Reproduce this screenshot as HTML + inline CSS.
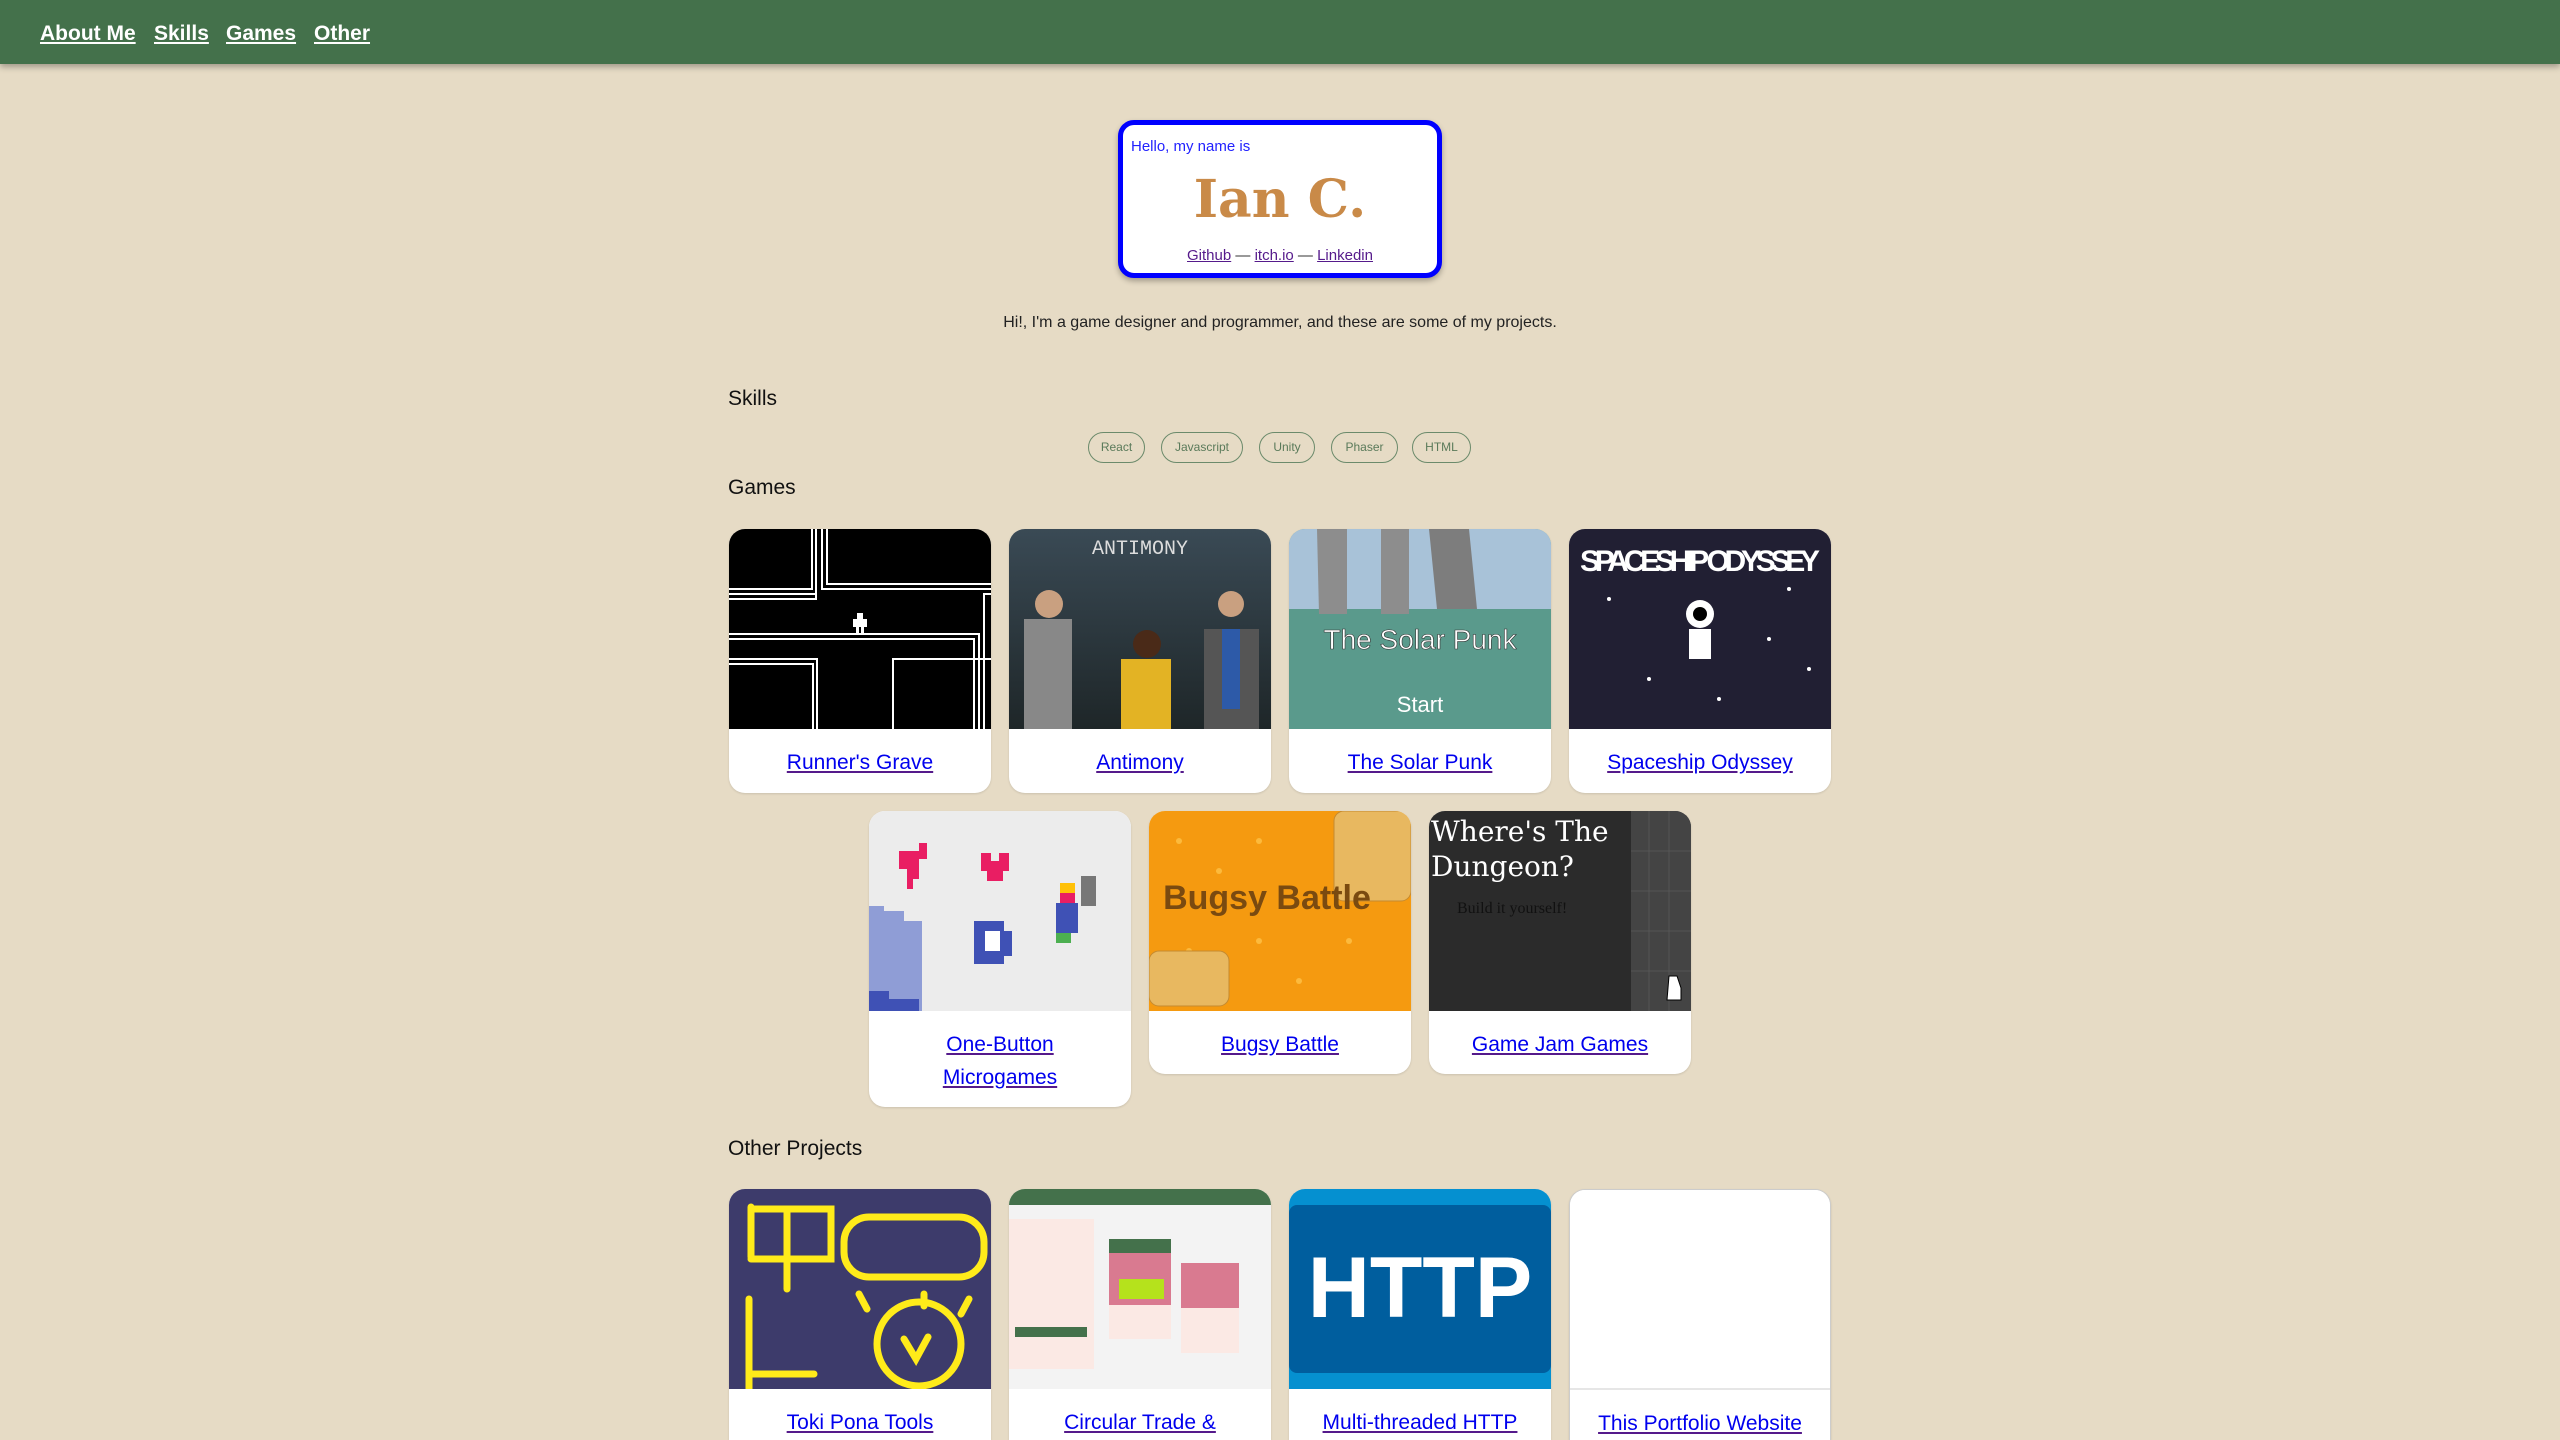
<!DOCTYPE html>
<html style="overflow:hidden;width:2560px;height:1440px"><head><meta charset="utf-8"><style>
*{box-sizing:border-box;margin:0;padding:0}
body{width:2560px;height:1440px;overflow:hidden;background:#e6dbc5;font-family:"Liberation Sans",sans-serif;position:relative}
.nav{position:absolute;left:0;top:0;width:2560px;height:64px;background:#44714b;box-shadow:0 3px 6px rgba(0,0,0,.3)}
.nav a{position:absolute;top:22px;color:#fff;font-weight:bold;font-size:21px;text-decoration:underline}
.hero{position:absolute;left:1118px;top:120px;width:324px;height:158px;background:#fff;border:5px solid #0000ff;border-radius:16px;box-shadow:0 3px 6px rgba(0,0,0,.3)}
.hello{position:absolute;left:8px;top:13px;font-size:15px;color:#2222ff}
.name{position:absolute;left:0;right:0;top:44px;text-align:center;font-family:"DejaVu Serif",serif;font-weight:bold;font-size:52px;color:#c98a48}
.links{position:absolute;left:0;right:0;top:122px;text-align:center;font-size:15px;color:#333}
.links a{color:#551a8b;text-decoration:underline}
.intro{position:absolute;left:0;width:2560px;top:314px;text-align:center;font-size:16px;color:#222}
h2{position:absolute;left:728px;font-size:21px;font-weight:normal;color:#111}
.chip{position:absolute;top:432px;height:31px;border:1.5px solid #6b8a6b;border-radius:16px;font-size:12px;color:#5a7a5a;text-align:center;line-height:28px}
.card{position:absolute;width:262px;background:#fff;border-radius:16px;overflow:hidden;box-shadow:0 1px 2px rgba(0,0,0,.12)}
.card svg{display:block;width:262px;height:200px}
.card .t{text-align:center;padding-top:17px;font-size:21px;line-height:33px}
.card .t a{color:#0000ee;text-decoration:underline;text-decoration-color:#551a8b}
</style></head><body>
<div class="nav"><a style="left:40px">About Me</a><a style="left:154px">Skills</a><a style="left:226px">Games</a><a style="left:314px">Other</a></div>
<div class="hero"><div class="hello">Hello, my name is</div><div class="name">Ian C.</div><div class="links"><a>Github</a> — <a>itch.io</a> — <a>Linkedin</a></div></div>
<div class="intro">Hi!, I'm a game designer and programmer, and these are some of my projects.</div>
<h2 style="top:387px">Skills</h2>
<div class="chip" style="left:1088px;width:57px">React</div>
<div class="chip" style="left:1161px;width:82px">Javascript</div>
<div class="chip" style="left:1259px;width:56px">Unity</div>
<div class="chip" style="left:1331px;width:67px">Phaser</div>
<div class="chip" style="left:1412px;width:59px">HTML</div>
<h2 style="top:476px">Games</h2>

<div class="card" style="left:729px;top:529px;height:264px"><svg viewBox="0 0 262 200"><rect width="262" height="200" fill="#000"/><g stroke="#fff" stroke-width="2" fill="none"><path d="M93 0V60H262M98 0V55H262M0 60H83V0M0 65H88M0 70H87V0"/><path d="M0 105H250V200M0 110H245V200M0 130H88V200M0 135H84V200M262 65H255V200"/><path d="M164 200V130H262"/></g><path d="M128 84h6v6h4v8h-3v8h-3v-8h-2v8h-3v-8h-3v-8h4z" fill="#fff"/></svg><div class="t"><a>Runner's Grave</a></div></div>
<div class="card" style="left:1009px;top:529px;height:264px"><svg viewBox="0 0 262 200"><defs><linearGradient id="f" x1="0" y1="0" x2="0" y2="1"><stop offset="0" stop-color="#3a4a55"/><stop offset="1" stop-color="#1e2628"/></linearGradient></defs><rect width="262" height="200" fill="url(#f)"/><text x="131" y="25" text-anchor="middle" fill="#ddd" font-size="20" font-family="Liberation Mono">ANTIMONY</text><rect x="15" y="90" width="48" height="110" fill="#888"/><circle cx="40" cy="75" r="14" fill="#c9a080"/><rect x="112" y="130" width="50" height="70" fill="#e3b324"/><circle cx="138" cy="115" r="14" fill="#4a2a18"/><rect x="195" y="100" width="55" height="100" fill="#555"/><rect x="213" y="100" width="18" height="80" fill="#2d5aa8"/><circle cx="222" cy="75" r="13" fill="#c9a080"/></svg><div class="t"><a>Antimony</a></div></div>
<div class="card" style="left:1289px;top:529px;height:264px"><svg viewBox="0 0 262 200"><rect width="262" height="200" fill="#5a9a8c"/><rect width="262" height="80" fill="#a8c2d8"/><path d="M28 0h30v85H30z" fill="#8d8d8d"/><path d="M92 0h28v85H92z" fill="#8d8d8d"/><path d="M140 0h40l8 80h-40z" fill="#7d7d7d"/><text x="131" y="120" text-anchor="middle" fill="#fff" font-size="28" font-family="Liberation Sans" stroke="#333" stroke-width=".6">The Solar Punk</text><text x="131" y="183" text-anchor="middle" fill="#fff" font-size="22" font-family="Liberation Sans">Start</text></svg><div class="t"><a>The Solar Punk</a></div></div>
<div class="card" style="left:1569px;top:529px;height:264px"><svg viewBox="0 0 262 200"><rect width="262" height="200" fill="#211f33"/><text x="131" y="42" text-anchor="middle" fill="#fff" font-size="30" font-weight="bold" font-family="Liberation Sans Narrow,Liberation Sans" textLength="240">SPACESHIP ODYSSEY</text><circle cx="131" cy="85" r="14" fill="#fff"/><circle cx="131" cy="85" r="7" fill="#000"/><rect x="120" y="100" width="22" height="30" fill="#fff"/><g fill="#fff"><circle cx="40" cy="70" r="2"/><circle cx="80" cy="150" r="2"/><circle cx="200" cy="110" r="2"/><circle cx="240" cy="140" r="2"/><circle cx="150" cy="170" r="2"/><circle cx="220" cy="60" r="2"/></g></svg><div class="t"><a>Spaceship Odyssey</a></div></div>

<div class="card" style="left:869px;top:811px;height:296px"><svg viewBox="0 0 262 200"><rect width="262" height="200" fill="#ececec"/><path d="M0 95h15v5h20v10h18v90H0z" fill="#8f9dd6"/><path d="M0 180h20v8h30v12H0z" fill="#3f51b5"/><path d="M30 40h20v-8h8v16h-8v20h-6v10h-6v-20h-8z" fill="#e91e63"/><path d="M112 42h10v8h8v-8h10v18h-6v10h-16v-10h-6z" fill="#e91e63"/><path d="M105 110h30v10h8v25h-8v8h-30z" fill="#3f51b5"/><rect x="116" y="120" width="15" height="20" fill="#fff"/><rect x="191" y="72" width="15" height="10" fill="#ffc107"/><rect x="191" y="82" width="15" height="10" fill="#e91e63"/><rect x="187" y="92" width="22" height="30" fill="#3f51b5"/><rect x="187" y="122" width="15" height="10" fill="#4caf50"/><rect x="212" y="65" width="15" height="30" fill="#777"/></svg><div class="t"><a>One-Button<br>Microgames</a></div></div>
<div class="card" style="left:1149px;top:811px;height:263px"><svg viewBox="0 0 262 200"><rect width="262" height="200" fill="#f59a10"/><g fill="#ffc850" opacity=".7"><circle cx="30" cy="30" r="3"/><circle cx="70" cy="60" r="3"/><circle cx="110" cy="30" r="3"/><circle cx="40" cy="140" r="3"/><circle cx="150" cy="170" r="3"/><circle cx="200" cy="130" r="3"/><circle cx="110" cy="130" r="3"/></g><g fill="#e8b860" stroke="#c58a30"><rect x="185" y="0" width="77" height="90" rx="10"/><rect x="0" y="140" width="80" height="55" rx="10"/></g><text x="118" y="98" text-anchor="middle" fill="#7a4a10" font-size="34" font-weight="bold" font-family="Liberation Sans">Bugsy Battle</text></svg><div class="t"><a>Bugsy Battle</a></div></div>
<div class="card" style="left:1429px;top:811px;height:263px"><svg viewBox="0 0 262 200"><rect width="262" height="200" fill="#2b2b2b"/><rect x="202" width="60" height="200" fill="#444"/><g stroke="#555"><path d="M220 0V200M240 0V200M202 40H262M202 80H262M202 120H262M202 160H262"/></g><text x="2" y="30" fill="#fff" font-size="28" font-family="DejaVu Serif">Where's The</text><text x="2" y="65" fill="#fff" font-size="28" font-family="DejaVu Serif">Dungeon?</text><text x="28" y="102" fill="#111" font-size="16" font-family="Liberation Serif">Build it yourself!</text><path d="M240 165h8l4 12v12h-14z" fill="#fff" stroke="#000"/></svg><div class="t"><a>Game Jam Games</a></div></div>

<h2 style="top:1137px">Other Projects</h2>
<div class="card" style="left:729px;top:1189px;height:251px;border-radius:16px 16px 0 0"><svg viewBox="0 0 262 200"><rect width="262" height="200" fill="#3d3b6b"/><g stroke="#ffeb1a" stroke-width="7" fill="none" stroke-linecap="round"><path d="M22 18v50M22 20h80v50H22M58 20v80M20 110v95M20 185h65"/><rect x="115" y="28" width="140" height="60" rx="25"/><circle cx="190" cy="155" r="42"/><path d="M175 150l12 20 12-22M130 105l8 15M195 105v12M240 110l-8 15"/></g></svg><div class="t"><a>Toki Pona Tools</a></div></div>
<div class="card" style="left:1009px;top:1189px;height:251px;border-radius:16px 16px 0 0"><svg viewBox="0 0 262 200"><rect width="262" height="200" fill="#f3f3f3"/><rect width="262" height="16" fill="#44714b"/><rect x="0" y="30" width="85" height="150" fill="#fbe9e4"/><rect x="6" y="138" width="72" height="10" fill="#44714b"/><rect x="100" y="50" width="62" height="100" fill="#fbe9e4"/><rect x="100" y="50" width="62" height="14" fill="#44714b"/><rect x="100" y="64" width="62" height="52" fill="#d97a90"/><rect x="110" y="90" width="45" height="20" fill="#b5e21c"/><rect x="172" y="74" width="58" height="90" fill="#fbe9e4"/><rect x="172" y="74" width="58" height="45" fill="#d97a90"/></svg><div class="t"><a>Circular Trade &amp;</a></div></div>
<div class="card" style="left:1289px;top:1189px;height:251px;border-radius:16px 16px 0 0"><svg viewBox="0 0 262 200"><rect width="262" height="200" fill="#0590d0"/><rect x="0" y="16" width="262" height="168" rx="8" fill="#005e9e"/><text x="131" y="128" text-anchor="middle" fill="#fff" font-size="86" font-weight="bold" font-family="Liberation Sans">HTTP</text></svg><div class="t"><a>Multi-threaded HTTP</a></div></div>
<div class="card" style="left:1569px;top:1189px;height:251px;border:1px solid #ccc;border-bottom:0;border-radius:16px 16px 0 0"><svg viewBox="0 0 262 200"><rect width="262" height="199" fill="#fff"/><path d="M0 199H262" stroke="#ccc"/></svg><div class="t"><a>This Portfolio Website</a></div></div>
</body></html>
